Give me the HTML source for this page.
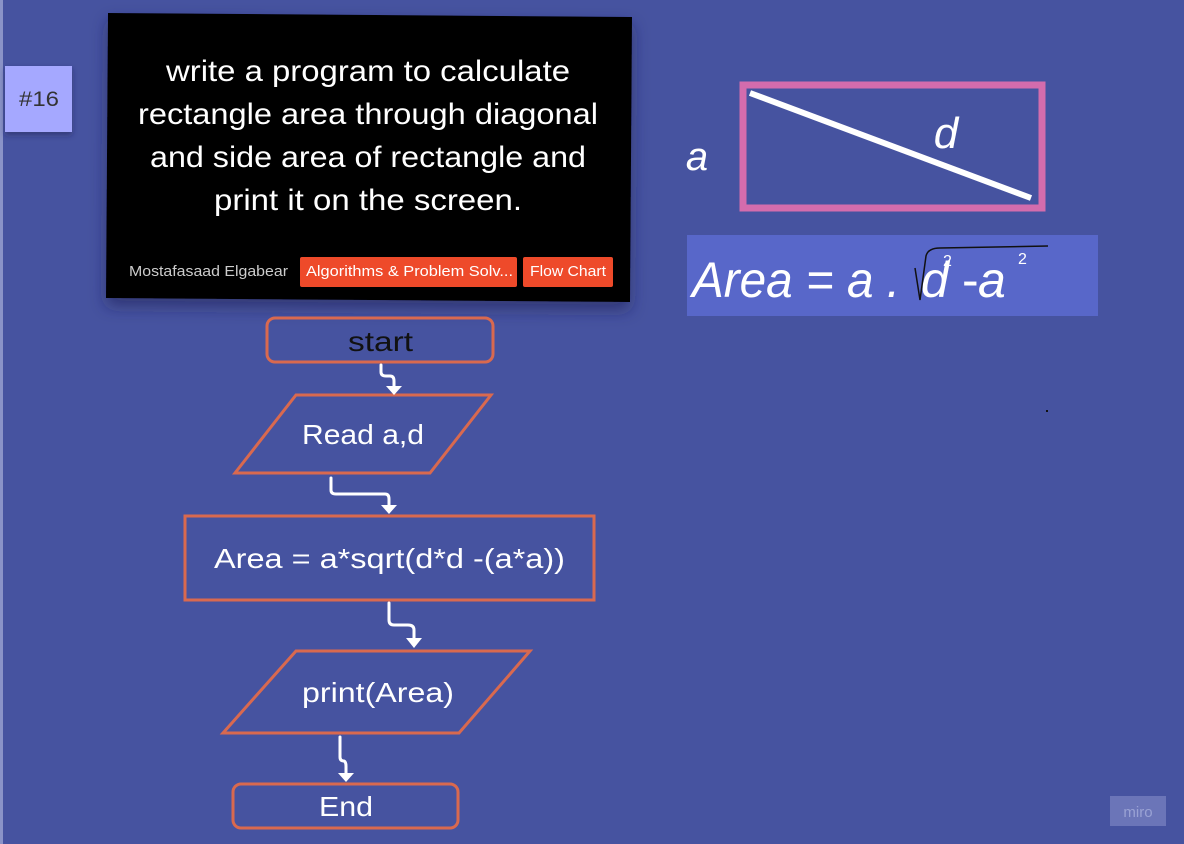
<!DOCTYPE html>
<html><head><meta charset="utf-8"><style>
html,body{margin:0;padding:0;background:#4653a0;}
svg{display:block}
text{font-family:"Liberation Sans","DejaVu Sans",sans-serif}
</style></head><body>
<svg width="1184" height="844" viewBox="0 0 1184 844" xmlns="http://www.w3.org/2000/svg">
<defs>
<filter id="sh" x="-10%" y="-10%" width="130%" height="140%"><feDropShadow dx="0" dy="8" stdDeviation="8" flood-color="#1a1f50" flood-opacity="0.55"/></filter>
<filter id="sh2" x="-20%" y="-20%" width="150%" height="150%"><feDropShadow dx="0" dy="3" stdDeviation="3" flood-color="#1a1f50" flood-opacity="0.5"/></filter>
</defs>
<rect width="1184" height="844" fill="#4653a0"/>
<rect x="0" y="0" width="3" height="844" fill="#8a93c8"/>
<!-- sticky -->
<rect x="5" y="66" width="67" height="66" fill="#a5a8ff" filter="url(#sh2)"/>
<text x="19" y="106" font-size="21" fill="#333" textLength="40" lengthAdjust="spacingAndGlyphs">#16</text>
<!-- card -->
<polygon points="108,13 632,17 630,302 106,298" fill="#000" filter="url(#sh)"/>
<g fill="#fff" font-size="30" lengthAdjust="spacingAndGlyphs">
<text x="166" y="81" textLength="404" lengthAdjust="spacingAndGlyphs">write a program to calculate</text>
<text x="138" y="124" textLength="460" lengthAdjust="spacingAndGlyphs">rectangle area through diagonal</text>
<text x="150" y="167" textLength="436" lengthAdjust="spacingAndGlyphs">and side area of rectangle and</text>
<text x="214" y="210" textLength="308" lengthAdjust="spacingAndGlyphs">print it on the screen.</text>
</g>
<text x="129" y="276" font-size="15" fill="#ccc" textLength="159" lengthAdjust="spacingAndGlyphs">Mostafasaad Elgabear</text>
<rect x="300" y="257" width="217" height="30" rx="2" fill="#ee4a2a"/>
<text x="306" y="276" font-size="15" fill="#fff" textLength="207" lengthAdjust="spacingAndGlyphs">Algorithms &amp; Problem Solv...</text>
<rect x="523" y="257" width="90" height="30" rx="2" fill="#ee4a2a"/>
<text x="530" y="276" font-size="15" fill="#fff" textLength="76" lengthAdjust="spacingAndGlyphs">Flow Chart</text>
<!-- flowchart -->
<g fill="none" stroke="#d9694f" stroke-width="3">
<rect x="267" y="318" width="226" height="44" rx="8"/>
<polygon points="235,473 296,395 491,395 430,473"/>
<rect x="185" y="516" width="409" height="84"/>
<polygon points="223,733 296,651 530,651 459,733"/>
<rect x="233" y="784" width="225" height="44" rx="8"/>
</g>
<g font-size="28">
<text x="348" y="351" fill="#111" textLength="65" lengthAdjust="spacingAndGlyphs">start</text>
<text x="302" y="444" fill="#fff" textLength="122" lengthAdjust="spacingAndGlyphs">Read a,d</text>
<text x="214" y="568" fill="#fff" textLength="351" lengthAdjust="spacingAndGlyphs">Area = a*sqrt(d*d -(a*a))</text>
<text x="302" y="702" fill="#fff" textLength="152" lengthAdjust="spacingAndGlyphs">print(Area)</text>
<text x="319" y="816" fill="#fff" textLength="54" lengthAdjust="spacingAndGlyphs">End</text>
</g>
<g fill="none" stroke="#fff" stroke-width="3" stroke-linecap="round" stroke-linejoin="round">
<path d="M381,365 V372 Q381,376 386,376 H390 Q394,376 394,381 V388"/>
<path d="M331,478 V490 Q331,494 336,494 H385 Q389,494 389,499 V507"/>
<path d="M389,603 V620 Q389,625 394,625 H408 Q414,625 414,630 V640"/>
<path d="M340,737 V757 Q340,761 344,761 Q346,762 346,766 V775"/>
</g>
<g fill="#fff">
<polygon points="386,386 402,386 394,395"/>
<polygon points="381,505 397,505 389,514"/>
<polygon points="406,638 422,638 414,648"/>
<polygon points="338,773 354,773 346,782"/>
</g>
<!-- diagram -->
<rect x="743" y="85" width="299" height="123" fill="none" stroke="#d46cad" stroke-width="7"/>
<line x1="750" y1="93" x2="1031" y2="198" stroke="#fff" stroke-width="6"/>
<text x="697" y="170" font-size="40" fill="#fff" font-style="italic" text-anchor="middle" font-family="DejaVu Sans">a</text>
<text x="946" y="148" font-size="44" fill="#fff" font-style="italic" text-anchor="middle" font-family="DejaVu Sans">d</text>
<rect x="687" y="235" width="411" height="81" fill="#5867c9"/>
<text x="692" y="297" font-size="50" fill="#fff" font-style="italic" font-family="DejaVu Sans" textLength="208" lengthAdjust="spacingAndGlyphs">Area = a .</text>
<path d="M915,268 L920,300 L926,256 Q928,248 940,248 L1048,246" fill="none" stroke="#111" stroke-width="1.5"/>
<text x="921" y="297" font-size="50" fill="#fff" font-style="italic" font-family="DejaVu Sans">d</text>
<text x="962" y="297" font-size="50" fill="#fff" font-family="DejaVu Sans">-</text>
<text x="978" y="297" font-size="50" fill="#fff" font-style="italic" font-family="DejaVu Sans">a</text>
<text x="943" y="266" font-size="16" fill="#fff">2</text>
<text x="1018" y="264" font-size="16" fill="#fff">2</text>
<rect x="1046" y="410" width="2" height="2" fill="#111"/>
<!-- miro -->
<rect x="1110" y="796" width="56" height="30" fill="#6b75b8"/>
<text x="1138" y="817" font-size="15" fill="#9aa2d4" text-anchor="middle">miro</text>
</svg>
</body></html>
